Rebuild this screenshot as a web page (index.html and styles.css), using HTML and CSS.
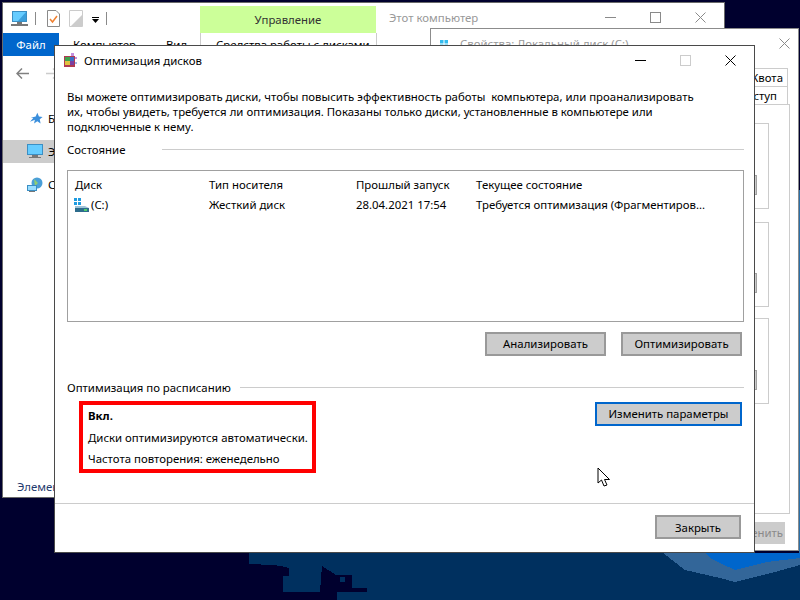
FILE: index.html
```html
<!DOCTYPE html>
<html lang="ru">
<head>
  <meta charset="UTF-8">
  <title>Оптимизация дисков</title>
  <link rel="stylesheet" href="styles.css">
</head>
<body>
  <div class="desktop">
    <!-- wallpaper -->
    <svg class="wallpaper" width="800" height="600" viewBox="0 0 800 600" shape-rendering="crispEdges">
      <path fill="#00305f" d="M249 553H800V600H337V592H367V588H352V582H340V577H345V582H352V575H336L322 566L320 592H283V576H294V568H300V576H289V568L281 566L272 565L249 564Z"/>
      <path fill="#336699" d="M663 553H800V565L775 572L735 582L720 578L685 570Z"/>
      <path fill="#0066cc" d="M705 553H800V558L767 562L735 570L720 563L710 558Z"/>
      <rect x="799" y="190" width="1" height="363" fill="#2a6fa8"/>
    </svg>

    <!-- explorer window behind -->
    <div class="window explorer">
      <div class="qat">
        <svg width="17" height="16" viewBox="0 0 17 16"><rect x="1" y="0" width="15" height="11" fill="#3b8fc4"/><rect x="2" y="1" width="13" height="9" fill="#66ccff"/><path fill="#3b9fdc" d="M15 1V10H7Z"/><rect x="6" y="11" width="5" height="2" fill="#777"/><rect x="0" y="13" width="17" height="2" fill="#777"/></svg>
        <span class="qat-sep"></span>
        <svg class="qat-doc" width="13" height="17" viewBox="0 0 13 17"><path fill="#fff" stroke="#8a8a8a" d="M.5.5H9L12.5 4V16.5H.5Z"/><path fill="none" stroke="#f08030" stroke-width="1.5" d="M3 9L5.500 12L10 6"/></svg>
        <svg class="qat-blank" width="14" height="17" viewBox="0 0 14 17"><path fill="#fff" stroke="#ccc" d="M.5.5H13.5V16.5H.5Z"/><path fill="#ccc" d="M13 5V16H2Z"/></svg>
        <svg class="qat-drop" width="7" height="6" viewBox="0 0 7 6"><rect width="7" height="1"/><path d="M0 2H7L3.5 6Z"/></svg>
        <span class="qat-sep"></span>
      </div>
      <div class="context-tab">Управление</div>
      <div class="window-title">Этот компьютер</div>
      <div class="caption faded">
        <svg width="11" height="11" viewBox="0 0 11 11"><path d="M0 5.500H11" stroke="#8a8a8a"/></svg>
        <svg width="11" height="11" viewBox="0 0 11 11"><rect x=".5" y=".5" width="10" height="10" fill="none" stroke="#8a8a8a"/></svg>
        <svg width="11" height="11" viewBox="0 0 11 11"><path d="M.5.5L10.500 10.500M10.500.5L.5 10.500" stroke="#8a8a8a"/></svg>
      </div>
      <div class="ribbon">
        <div class="file-tab">Файл</div>
        <div class="ribbon-tab">Компьютер</div>
        <div class="ribbon-tab view">Вид</div>
        <div class="ribbon-tab tools">Средства работы с дисками</div>
      </div>
      <div class="nav-arrows">
        <svg width="13" height="11" viewBox="0 0 13 11"><path d="M6 .5L1 5.500L6 10.500M1 5.500H13" fill="none" stroke="#808080" stroke-width="1.500"/></svg>
        <svg width="13" height="11" viewBox="0 0 13 11"><path d="M7 .5L12 5.500L7 10.500M0 5.500H12" fill="none" stroke="#ccc" stroke-width="1.500"/></svg>
      </div>
      <div class="tree">
        <div class="tree-row">
          <svg class="star" width="13" height="13" viewBox="0 0 16 14"><path fill="#3b8fdc" d="M9 0L11 4.500L15.500 5L12 8L13 13L9 10.500L5 13L6 8.500L0 11L4 6.500L1 6L7 4.500Z"/></svg>
          <span>Быстрый доступ</span>
        </div>
        <div class="tree-row selected">
          <svg width="16" height="15" viewBox="0 0 16 15"><rect x="0" y="0" width="16" height="11" fill="#3b8fc4"/><rect x="1" y="1" width="14" height="9" fill="#66ccff"/><rect x="5" y="11" width="6" height="2" fill="#777"/><rect x="2" y="13" width="12" height="1" fill="#777"/></svg>
          <span>Этот компьютер</span>
        </div>
        <div class="tree-row">
          <svg width="16" height="16" viewBox="0 0 16 16"><circle cx="10" cy="6" r="5.500" fill="#4a9fd8"/><path d="M7 2L11 6L8 9Z" fill="#8fcf6f"/><rect x="0" y="8" width="10" height="6" fill="#3b8fc4"/><rect x="1" y="9" width="8" height="4" fill="#99ddff"/><rect x="2" y="14" width="6" height="1" fill="#777"/></svg>
          <span>Сеть</span>
        </div>
      </div>
      <div class="status-text">Элементов: 3</div>
    </div>

    <!-- disk properties window -->
    <div class="window properties">
      <div class="props-title">
        <svg class="props-icon" width="8" height="8" viewBox="0 0 8 8"><rect width="3.500" height="3.500" fill="#33bbee"/><rect x="4.500" width="3.500" height="3.500" fill="#33bbee"/><rect y="4.500" width="3.500" height="3.500" fill="#33bbee"/><rect x="4.500" y="4.500" width="3.500" height="3.500" fill="#33bbee"/></svg>
        <span class="props-name">Свойства: Локальный диск (C:)</span>
      </div>
      <svg class="props-close" width="11" height="11" viewBox="0 0 11 11"><path d="M.5.5L10.500 10.500M10.500.5L.5 10.500" stroke="#8a8a8a"/></svg>
      <div class="props-tab quota"><span>Квота</span></div>
      <div class="props-tab access"><span>Доступ</span></div>
      <div class="props-panel">
        <div class="props-group first"><span class="props-btn"></span></div>
        <div class="props-group second"><span class="props-btn"></span></div>
        <div class="props-group third"><span class="props-btn"></span></div>
      </div>
      <div class="props-apply"><span>Применить</span></div>
    </div>

    <!-- main dialog -->
    <div class="window dialog">
      <div class="dialog-title">
        <svg width="15" height="15" viewBox="0 0 15 15"><rect x="1" y="3" width="11" height="11" fill="#b03a50"/><rect x="2" y="4" width="5" height="4" fill="#3fa34d"/><rect x="7" y="4" width="4" height="4" fill="#3b6fc4"/><rect x="2" y="8" width="5" height="4" fill="#e0c040"/><rect x="7" y="8" width="4" height="4" fill="#7a3fa0"/><rect x="8" y="0" width="3" height="3" fill="#c58fe0"/><rect x="12" y="4" width="2" height="2" fill="#c58fe0"/><rect x="12" y="9" width="2" height="2" fill="#9fb8e8"/></svg>
        <span class="dialog-name">Оптимизация дисков</span>
        <div class="caption">
          <svg width="11" height="11" viewBox="0 0 11 11"><path d="M0 5.500H11" stroke="#000"/></svg>
          <svg width="11" height="11" viewBox="0 0 11 11"><rect x=".5" y=".5" width="10" height="10" fill="none" stroke="#ccc"/></svg>
          <svg width="11" height="11" viewBox="0 0 11 11"><path d="M.5.5L10.500 10.500M10.500.5L.5 10.500" stroke="#000"/></svg>
        </div>
      </div>

      <div class="dialog-body">
        <p class="intro">Вы можете оптимизировать диски, чтобы повысить эффективность работы&nbsp; компьютера, или проанализировать<br>их, чтобы увидеть, требуется ли оптимизация. Показаны только диски, установленные в компьютере или<br>подключенные к нему.</p>

        <div class="section-head state"><span>Состояние</span><i></i></div>

        <div class="drive-list">
          <div class="drive-row head">
            <span>Диск</span><span>Тип носителя</span><span>Прошлый запуск</span><span>Текущее состояние</span>
          </div>
          <div class="drive-row">
            <span class="drive-name">
              <svg width="15" height="14" viewBox="0 0 15 14"><g fill="#1e9be0"><rect x="0" y="0" width="3" height="3"/><rect x="4" y="0" width="3" height="3"/><rect x="0" y="4" width="3" height="3"/><rect x="4" y="4" width="3" height="3"/></g><path fill="#9fc3d8" d="M1 8H11L15 10V11H1Z"/><rect x="1" y="10" width="14" height="4" fill="#2d6c8c"/><rect x="10" y="11" width="3" height="2" fill="#4fd06a"/></svg>
              (C:)
            </span>
            <span>Жесткий диск</span><span>28.04.2021 17:54</span><span>Требуется оптимизация (Фрагментиров...</span>
          </div>
        </div>

        <div class="actions">
          <button class="btn wide">Анализировать</button>
          <button class="btn wide">Оптимизировать</button>
        </div>

        <div class="section-head sched"><span>Оптимизация по расписанию</span><i></i></div>

        <div class="schedule">
          <div class="sched-info">
            <b>Вкл.</b>
            <span>Диски оптимизируются автоматически.</span>
            <span>Частота повторения: еженедельно</span>
          </div>
          <button class="btn focused">Изменить параметры</button>
        </div>
      </div>

      <div class="dialog-footer">
        <button class="btn close">Закрыть</button>
      </div>
    </div>

    <svg class="cursor" width="14" height="20" viewBox="0 0 14 20"><path fill="#fff" stroke="#000" d="M1 1V16L4.500 13L7 19L10 18L7.500 12.500H12.500Z"/></svg>
  </div>
</body>
</html>
```

FILE: styles.css
```css
* { box-sizing: border-box; }
body {
  margin: 0;
  font-family: "Noto Sans", "Open Sans", sans-serif;
  font-size: 11.4px;
  color: #000;
}
svg { display: block; flex: none; }
.desktop {
  position: relative;
  width: 800px;
  height: 600px;
  overflow: hidden;
  background: #00002e;
}
.wallpaper { position: absolute; left: 0; top: 0; }
.window {
  position: absolute;
  background: #fff;
  overflow: hidden;
}

/* explorer */
.explorer {
  left: 2px;
  top: 2px;
  width: 723px;
  height: 496px;
  border: 1px solid #6a6a6a;
}
.qat {
  position: absolute;
  left: 8px;
  top: 7px;
  display: flex;
  align-items: center;
  gap: 7px;
}
.qat-sep { width: 1px; height: 13px; background: #8a8a8a; }
.qat-doc { margin-left: 4px; }
.qat-blank { margin-left: 2px; }
.qat-drop { margin: 2px 0 0 2px; }
.context-tab {
  position: absolute;
  left: 197px;
  top: 3px;
  width: 176px;
  height: 27px;
  background: #ccff99;
  color: #333;
  text-align: center;
  line-height: 28px;
}
.window-title { position: absolute; left: 386px; top: 7px; color: #999; }
.caption {
  margin-left: auto;
  display: flex;
  align-items: center;
  gap: 34px;
}
.caption.faded {
  position: absolute;
  right: 18px;
  top: 9px;
}
.ribbon {
  position: absolute;
  left: 0;
  top: 30px;
  width: 100%;
  display: flex;
  white-space: nowrap;
}
.file-tab {
  width: 56px;
  height: 23px;
  background: #0066cc;
  color: #fff;
  text-align: center;
  line-height: 24px;
}
.ribbon-tab { padding-top: 4px; margin-left: 14px; }
.ribbon-tab.view { margin-left: 30px; }
.ribbon-tab.tools {
  margin-left: 0;
  position: absolute;
  left: 197px;
  width: 177px;
  height: 30px;
  padding-left: 15px;
  border: 1px solid #ccc;
  border-top: 0;
}
.nav-arrows {
  position: absolute;
  left: 13px;
  top: 65px;
  display: flex;
  gap: 17px;
}
.tree {
  position: absolute;
  left: 0;
  top: 104px;
  width: 51px;
  overflow: hidden;
  display: flex;
  flex-direction: column;
  gap: 10px;
}
.tree-row {
  display: flex;
  align-items: center;
  gap: 5px;
  height: 23px;
  padding-left: 24px;
  white-space: nowrap;
}
.tree-row.selected { background: #ccc; }
.star { margin-left: 3px; }
.status-text {
  position: absolute;
  left: 14px;
  top: 476px;
  width: 37px;
  overflow: hidden;
  white-space: nowrap;
  color: #1f3a6e;
}

/* disk properties */
.properties {
  left: 430px;
  top: 28px;
  width: 369px;
  height: 523px;
  border: 1px solid #8c8c8c;
}
.props-title {
  position: absolute;
  left: 9px;
  top: 7px;
  display: flex;
  gap: 12px;
  color: #999;
}
.props-icon { margin-top: 4px; }
.props-close { position: absolute; left: 348px; top: 9px; }
.props-tab {
  position: absolute;
  right: 10px;
  width: 90px;
  height: 19px;
  border: 1px solid #ccc;
  text-align: right;
  line-height: 17px;
  white-space: nowrap;
}
.props-tab.quota { top: 39px; padding-right: 4px; }
.props-tab.access { top: 57px; padding-right: 10px; }
.props-panel {
  position: absolute;
  left: 300px;
  top: 75px;
  width: 59px;
  height: 410px;
  border: 1px solid #ccc;
}
.props-group {
  position: absolute;
  left: 0;
  width: 37px;
  border: 1px solid #ccc;
}
.props-group.first { top: 18px; height: 86px; }
.props-group.second { top: 117px; height: 85px; }
.props-group.third { top: 213px; height: 86px; }
.props-btn {
  position: absolute;
  right: 11px;
  top: 51px;
  width: 16px;
  height: 20px;
  background: #ccc;
  border: 1px solid #a0a0a0;
}
.props-group.second .props-btn { top: 50px; }
.props-apply {
  position: absolute;
  left: 323px;
  top: 493px;
  width: 31px;
  height: 22px;
  overflow: hidden;
  display: flex;
  justify-content: flex-end;
  padding-right: 2px;
  background: #ccc;
  color: #8a8a8a;
  line-height: 22px;
}

/* dialog */
.dialog {
  left: 54px;
  top: 45px;
  width: 701px;
  height: 508px;
  border: 1px solid #4a4a4a;
  display: flex;
  flex-direction: column;
}
.dialog-title {
  display: flex;
  align-items: center;
  height: 29px;
  padding: 0 18px 0 8px;
}
.dialog-name { margin-left: 6px; }
.dialog-body {
  flex: 1;
  padding: 14px 10px 0 12px;
}
.intro { margin: 0; line-height: 15px; }
.section-head {
  display: flex;
  align-items: center;
  height: 17px;
}
.section-head i { flex: 1; height: 1px; background: #ccc; }
.section-head.state { margin-top: 7px; gap: 37px; }
.section-head.sched { margin-top: 23px; gap: 9px; }
.drive-list {
  margin-top: 12px;
  width: 677px;
  height: 152px;
  border: 1px solid #a0a0a0;
  padding: 3px 0 0 7px;
}
.drive-row {
  display: grid;
  grid-template-columns: 134px 147px 120px 1fr;
  height: 21px;
  line-height: 15px;
  align-items: center;
}
.drive-row.head { height: 20px; }
.drive-name { display: flex; align-items: center; gap: 2px; margin-left: -1px; }
.actions {
  display: flex;
  justify-content: flex-end;
  gap: 15px;
  margin-top: 10px;
  padding-right: 2px;
}
.btn {
  height: 24px;
  padding: 0 0 2px;
  background: #ccc;
  border: 2px solid #999;
  font: inherit;
  color: #000;
}
.btn.wide { width: 121px; }
.btn.focused { width: 147px; border-color: #0066cc; margin-right: 2px; }
.btn.close { width: 86px; padding: 0; }
.schedule {
  display: flex;
  justify-content: space-between;
  align-items: flex-start;
  margin-top: 6px;
}
.sched-info {
  margin-left: 12px;
  margin-top: -1px;
  width: 237px;
  height: 72px;
  border: 4px solid #f00;
  padding: 3px 5px 3px;
  display: flex;
  flex-direction: column;
  justify-content: space-between;
  white-space: nowrap;
}
.dialog-footer {
  height: 49px;
  border-top: 1px solid #ccc;
  display: flex;
  justify-content: flex-end;
  padding: 11px 13px 0 0;
}
.cursor { position: absolute; left: 597px; top: 467px; }
```
